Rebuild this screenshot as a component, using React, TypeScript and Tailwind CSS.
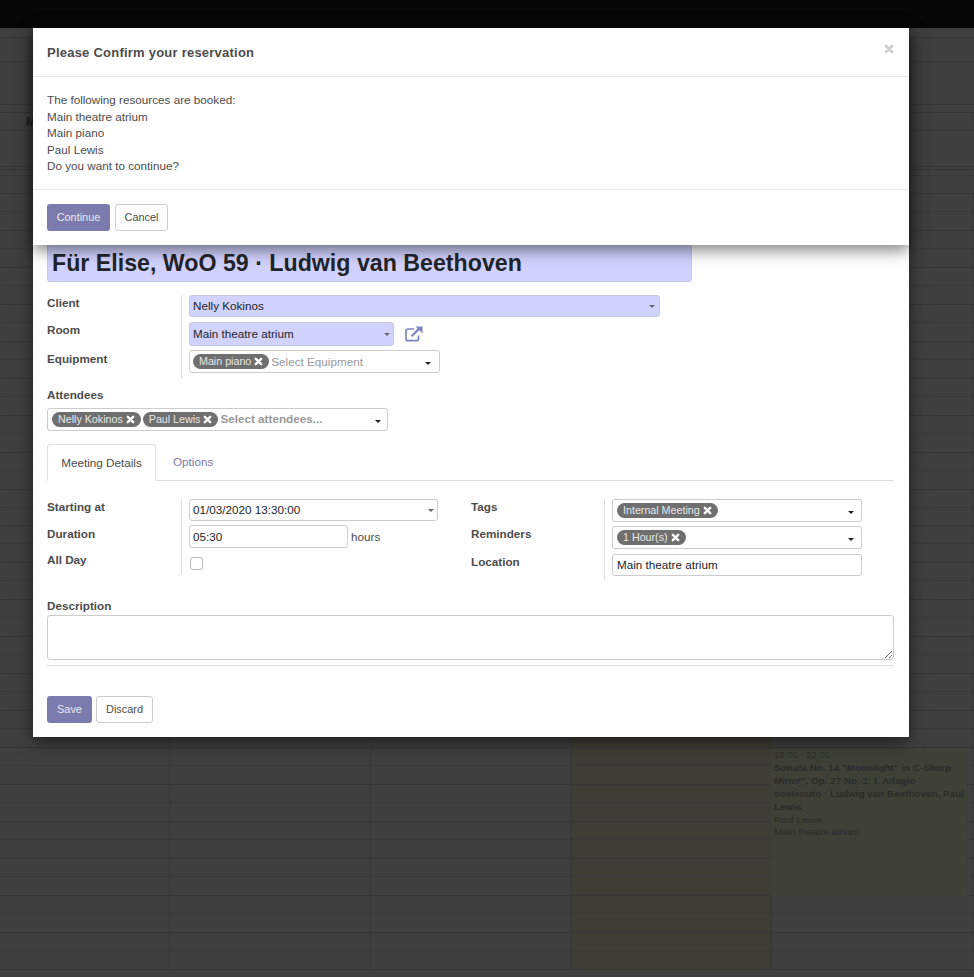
const slots = Array.from({ length: 21 })

function Caret({ dark }: { dark?: boolean }) {
  return (
    <span
      className={
        dark
          ? "mt-[3px] block h-0 w-0 border-x-[3px] border-t-[3px] border-x-transparent border-t-[#222]"
          : "block h-0 w-0 border-x-[3px] border-t-[3px] border-x-transparent border-t-[#666]"
      }
    />
  )
}

function Times({ className }: { className: string }) {
  return (
    <svg viewBox="0 0 10 10" className={className} fill="none" stroke="currentColor" strokeWidth="2.6" strokeLinecap="round">
      <path d="M2 2l6 6M8 2l-6 6" />
    </svg>
  )
}

function Pill({ text }: { text: string }) {
  return (
    <span className="flex h-[15px] shrink-0 items-center gap-[3px] rounded-full bg-[#6f6f6f] pl-[6px] pr-[6px] text-[10.7px] leading-[15px] text-[#e8e8e8]">
      {text}
      <Times className="h-[9px] w-[9px] text-white" />
    </span>
  )
}

function Label({ children, className }: { children: string; className: string }) {
  return <div className={"text-[11.7px] font-bold leading-[14px] text-[#4c4c4c] " + className}>{children}</div>
}

function ExternalIcon() {
  return (
    <svg viewBox="0 0 18 16" className="block h-4 w-[18px] text-[#7b86c0]" fill="none" stroke="currentColor">
      <path d="M13.5 9.5v3.2a2 2 0 0 1-2 2H3a2 2 0 0 1-2-2V5a2 2 0 0 1 2-2h6" strokeWidth="1.7" />
      <path d="M6.5 10.2 14.5 2.4" strokeWidth="2.2" />
      <path d="M10.5 0.4h7v7z" fill="currentColor" stroke="none" />
    </svg>
  )
}

// the week view sitting behind the dialogs, already dimmed by the backdrop
function Calendar() {
  return (
    <div className="h-[977px] overflow-hidden bg-[#3f3f3f]">
      <div className="h-[28px] bg-[#070707]" />
      <div className="h-[10px] border-b border-[#363636]" />
      <div className="h-[24px] border-b border-[#363636]" />
      <div className="h-[43px] border-b border-[#363636]" />
      <div className="h-[8px] border-b border-[#363636]" />
      <div className="grid h-[18px] grid-cols-[169px_201px_200px_201px_201px_1fr] border-b border-[#363636]">
        <div className="pl-[26px] text-[12px] font-bold leading-[18px] text-[#222]">Mon</div>
        <div className="border-l border-[#383838]" />
        <div className="border-l border-[#383838]" />
        <div className="border-l border-[#383838]" />
        <div className="border-l border-[#383838]" />
        <div className="border-l border-[#383838]" />
      </div>
      <div className="h-[36px] border-b border-[#363636]" />
      <div className="h-[3px] border-b border-[#363636]" />
      <div className="h-[6px] border-b border-dotted border-[#343434]" />
      <div className="h-[18px] border-b border-[#363636]" />
      <div className="grid grid-cols-[169px_201px_200px_201px_201px_1fr]">
        {Array.from({ length: 6 }).map((_, col) => (
          <div
            key={col}
            className={
              col === 3
                ? "border-l border-[#383838] bg-[#3e3d37]"
                : col === 0
                  ? ""
                  : "border-l border-[#383838]"
            }
          >
            {slots.map((_, i) => (
              <div key={i} className="h-[36.95px] border-b border-[#363636]">
                <div className="h-[18px] border-b border-dotted border-[#343434]" />
              </div>
            ))}
          </div>
        ))}
      </div>
    </div>
  )
}

function BookedEvent() {
  return (
    <div className="absolute left-[771px] top-[749px] h-[147px] w-[196px] bg-[#3f4139] pl-[3px] text-[9.9px] font-bold leading-[12.9px] text-[#2b2b2b]">
      <div className="text-[9.5px] font-normal">18:00 - 22:00</div>
      <div>Sonata No. 14 "Moonlight" in C-Sharp</div>
      <div>Minor", Op. 27 No. 2: I. Adagio</div>
      <div>sostenuto · Ludwig van Beethoven, Paul</div>
      <div>Lewis</div>
      <div className="font-normal">Paul Lewis</div>
      <div className="font-normal">Main theatre atrium</div>
    </div>
  )
}

function EventForm() {
  return (
    <div className="absolute left-[33px] top-[28px] h-[709px] w-[876px] bg-white pl-[14px] pr-[15px] pt-[212px] text-[11.7px] text-[#4c4c4c] shadow-[0_5px_15px_rgba(0,0,0,0.5)]">
      <div className="flex h-[42px] w-[645px] items-end rounded-[3px] border border-[#c8c8e0] bg-[#d2d2ff] pb-[2px] pl-[4px] text-[23.2px] font-bold leading-[32px] text-[#212529]">
        Für Elise, WoO 59 · Ludwig van Beethoven
      </div>

      <div className="mt-[13px] flex h-[83px]">
        <div className="w-[135px] border-r border-[#ddd]">
          <Label className="mt-[1px]">Client</Label>
          <Label className="mt-[13px]">Room</Label>
          <Label className="mt-[15px]">Equipment</Label>
        </div>
        <div className="flex flex-col pl-[7px]">
          <div className="flex h-[22px] w-[471px] items-center justify-between rounded-[3px] border border-[#c8c8e0] bg-[#d2d2ff] pl-[3px] pr-[4px] text-[#212529]">
            Nelly Kokinos
            <Caret />
          </div>
          <div className="mt-[5px] flex items-center">
            <div className="flex h-[24px] w-[205px] items-center justify-between rounded-[3px] border border-[#c8c8e0] bg-[#d2d2ff] pl-[3px] pr-[3px] text-[#212529]">
              Main theatre atrium
              <Caret />
            </div>
            <span className="ml-[11px]">
              <ExternalIcon />
            </span>
          </div>
          <div className="mt-[4px] flex h-[23px] w-[251px] items-center rounded-[3px] border border-[#ccc] pl-[3px] pr-[8px]">
            <Pill text="Main piano" />
            <span className="ml-[2px] text-[#999]">Select Equipment</span>
            <span className="ml-auto">
              <Caret dark />
            </span>
          </div>
        </div>
      </div>

      <Label className="mt-[10px]">Attendees</Label>
      <div className="mt-[6px] flex h-[23px] w-[341px] items-center gap-[2px] rounded-[3px] border border-[#ccc] pl-[4px] pr-[6px]">
        <Pill text="Nelly Kokinos" />
        <Pill text="Paul Lewis" />
        <span className="-mt-px font-bold text-[#999]">Select attendees...</span>
        <span className="ml-auto">
          <Caret dark />
        </span>
      </div>

      <div className="mt-[13px] flex h-[37px] border-b border-[#ddd]">
        <div className="-mb-px flex w-[109px] items-center justify-center rounded-t-[3px] border border-b-white border-[#ddd] bg-white">
          Meeting Details
        </div>
        <div className="ml-[17px] flex items-center text-[#7c7bad]">Options</div>
      </div>

      <div className="mt-[18px] flex">
        <div className="flex h-[75px] w-[135px] flex-col border-r border-[#ddd]">
          <Label className="mt-[1px]">Starting at</Label>
          <Label className="mt-[13px]">Duration</Label>
          <Label className="mt-[12px]">All Day</Label>
        </div>
        <div className="w-[289px] pl-[7px]">
          <div className="flex h-[22px] w-[249px] items-center justify-between rounded-[3px] border border-[#ccc] pl-[3px] pr-[3px] text-[#212529]">
            01/03/2020 13:30:00
            <Caret />
          </div>
          <div className="mt-[4px] flex items-center">
            <div className="flex h-[23px] w-[159px] items-center rounded-[3px] border border-[#ccc] pl-[3px] text-[#212529]">05:30</div>
            <span className="ml-[3px]">hours</span>
          </div>
          <input type="checkbox" readOnly className="ml-[1px] mt-[9px] block h-[13px] w-[13px] appearance-none rounded-[3px] border border-[#bbb]" />
        </div>
        <div className="flex h-[81px] w-[134px] flex-col border-r border-[#ddd]">
          <Label className="mt-[1px]">Tags</Label>
          <Label className="mt-[13px]">Reminders</Label>
          <Label className="mt-[14px]">Location</Label>
        </div>
        <div className="pl-[7px]">
          <div className="flex h-[23px] w-[250px] items-center justify-between rounded-[3px] border border-[#ccc] pl-[4px] pr-[7px]">
            <Pill text="Internal Meeting" />
            <Caret dark />
          </div>
          <div className="mt-[4px] flex h-[23px] w-[250px] items-center justify-between rounded-[3px] border border-[#ccc] pl-[4px] pr-[7px]">
            <Pill text="1 Hour(s)" />
            <Caret dark />
          </div>
          <div className="mt-[5px] flex h-[22px] w-[250px] items-center rounded-[3px] border border-[#ccc] pl-[4px] text-[#212529]">
            Main theatre atrium
          </div>
        </div>
      </div>

      <Label className="mt-[19px]">Description</Label>
      <textarea readOnly className="mt-[2px] block h-[45px] w-full rounded-[3px] border border-[#ccc] bg-white" />
      <div className="mt-[5px] border-t border-[#ddd]" />
      <div className="mt-[30px] flex gap-[4px]">
        <button className="h-[27px] w-[45px] rounded-[3px] bg-[#7c7bad] text-[10.9px] text-[#e9e9f3]">Save</button>
        <button className="h-[27px] w-[57px] rounded-[3px] border border-[#ccc] bg-white text-[10.9px] text-[#4c4c4c]">Discard</button>
      </div>
    </div>
  )
}

function ConfirmDialog() {
  return (
    <div className="absolute left-[33px] top-[28px] w-[876px] bg-white text-[11.7px] text-[#4c4c4c] shadow-[0_5px_15px_rgba(0,0,0,0.5)]">
      <div className="flex h-[49px] items-start justify-between border-b border-[#e5e5e5] pl-[14px] pr-[15px]">
        <h4 className="mt-[17px] text-[13px] font-bold leading-[15px] tracking-[0.23px]">Please Confirm your reservation</h4>
        <Times className="mt-[16px] h-[10px] w-[10px] text-[#ccc]" />
      </div>
      <div className="h-[113px] border-b border-[#e5e5e5] pl-[14px] pt-[15px] leading-[16.6px]">
        <div>The following resources are booked:</div>
        <div>Main theatre atrium</div>
        <div>Main piano</div>
        <div>Paul Lewis</div>
        <div>Do you want to continue?</div>
      </div>
      <div className="flex h-[55px] items-start gap-[5px] pl-[14px] pt-[14px]">
        <button className="h-[27px] w-[63px] rounded-[3px] bg-[#7c7bad] text-[10.9px] text-[#e9e9f3]">Continue</button>
        <button className="h-[27px] w-[53px] rounded-[3px] border border-[#ccc] bg-white text-[10.9px] text-[#4c4c4c]">Cancel</button>
      </div>
    </div>
  )
}

export default function App() {
  return (
    <div className="relative h-[977px] overflow-hidden font-['Liberation_Sans',sans-serif]">
      <Calendar />
      <BookedEvent />
      <EventForm />
      <ConfirmDialog />
    </div>
  )
}
